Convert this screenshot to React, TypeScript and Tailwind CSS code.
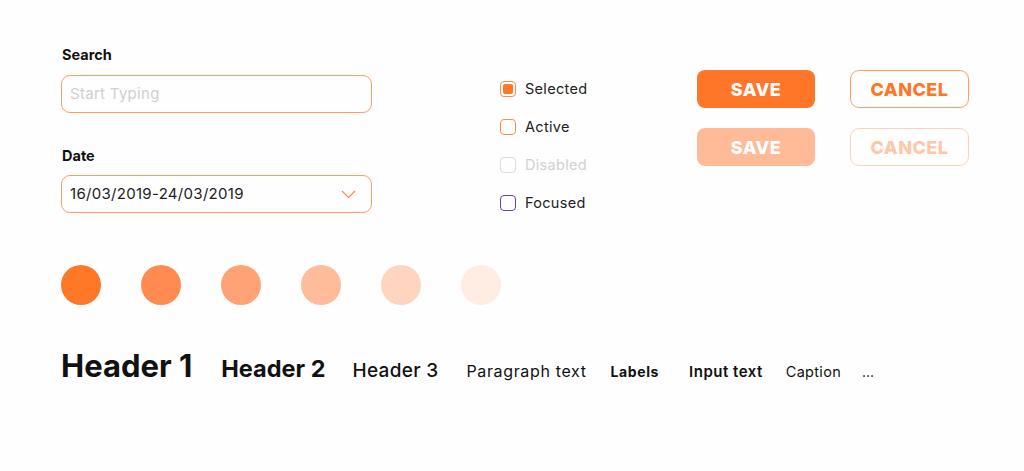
import React from 'react';

const circles = ['bg-[#ff7828]', 'bg-[#ff8b50]', 'bg-[#ffa377]', 'bg-[#ffbc9b]', 'bg-[#ffd5c0]', 'bg-[#ffece3]'];

function Checkbox({ label, state }: { label: string; state: 'selected' | 'active' | 'disabled' | 'focused' }) {
  const box =
    state === 'selected' || state === 'active'
      ? 'border-[#ff8a4c]'
      : state === 'disabled'
        ? 'border-[#dcdcdc]'
        : 'border-[#6a3fb0]';
  return (
    <div className="flex h-[38px] items-center gap-[9px]">
      <div className={`flex h-4 w-4 items-center justify-center rounded-[4px] border ${box}`}>
        {state === 'selected' && <div className="h-[10px] w-[10px] rounded-[2px] bg-[#ff7628]" />}
      </div>
      <span className={`text-[14.5px] tracking-[0.3px] ${state === 'disabled' ? 'text-[#d2d2d2]' : 'text-[#222]'}`}>{label}</span>
    </div>
  );
}

export default function App() {
  return (
    <div className="min-h-[471px] w-full bg-[#fefefe] pl-[61px] pt-[45px] text-[#111] [font-family:Inter,'Liberation_Sans',sans-serif]">
      <div className="flex items-start">
        <div className="flex w-[311px] flex-col">
          <label className="pl-[1px] text-[14.5px] leading-5 font-bold">Search</label>
          <div className="mt-[10px] flex h-[38px] items-center rounded-[9px] border border-[#ff9c62] px-[8px] text-[15px] tracking-[0.3px] text-[#d0d0d0]">
            Start Typing
          </div>
          <label className="mt-[33px] pl-[1px] text-[14.5px] leading-5 font-bold">Date</label>
          <div className="mt-[9px] flex h-[38px] items-center justify-between rounded-[9px] border border-[#ff9c62] pl-[8px] pr-[15px] text-[15px] tracking-[0.3px] text-[#222]">
            <span>16/03/2019-24/03/2019</span>
            <svg width="15" height="9" viewBox="0 0 15 9" fill="none">
              <path d="M1 1l6.5 6.5L14 1" stroke="#ff8a4c" strokeWidth="1.2" />
            </svg>
          </div>
        </div>

        <div className="ml-[128px] mt-[25px] flex w-[197px] flex-col">
          <Checkbox label="Selected" state="selected" />
          <Checkbox label="Active" state="active" />
          <Checkbox label="Disabled" state="disabled" />
          <Checkbox label="Focused" state="focused" />
        </div>

        <div className="mt-[25px] grid grid-cols-[118px_119px] gap-x-[35px] gap-y-[20px]">
          <button className="h-[38px] rounded-[8px] bg-[#ff7628] text-[18px] font-extrabold tracking-[0.5px] text-white">SAVE</button>
          <button className="h-[38px] rounded-[9px] border border-[#ff9c62] text-[18px] font-extrabold tracking-[0.5px] text-[#ff7628]">CANCEL</button>
          <button className="h-[38px] rounded-[8px] bg-[#ffbb98] text-[18px] font-extrabold tracking-[0.5px] text-white">SAVE</button>
          <button className="h-[38px] rounded-[9px] border border-[#ffd3bb] text-[18px] font-extrabold tracking-[0.5px] text-[#ffc6a8]">CANCEL</button>
        </div>
      </div>

      <div className="mt-[43px] flex gap-[40px]">
        {circles.map((c) => (
          <div key={c} className={`h-10 w-10 rounded-full ${c}`} />
        ))}
      </div>

      <div className="mt-[38px] flex items-baseline">
        <span className="text-[31px] font-bold">Header 1</span>
        <span className="ml-[29px] text-[23.5px] font-bold">Header 2</span>
        <span className="ml-[27px] text-[19px] font-medium tracking-[0.3px]">Header 3</span>
        <span className="ml-[28px] text-[16px] tracking-[0.65px]">Paragraph text</span>
        <span className="ml-[24px] text-[14px] font-bold tracking-[0.6px]">Labels</span>
        <span className="ml-[30px] text-[15px] font-semibold tracking-[0.5px]">Input text</span>
        <span className="ml-[23px] text-[14.5px] tracking-[0.3px]">Caption</span>
        <span className="ml-[21px] text-[14px]">...</span>
      </div>
    </div>
  );
}
